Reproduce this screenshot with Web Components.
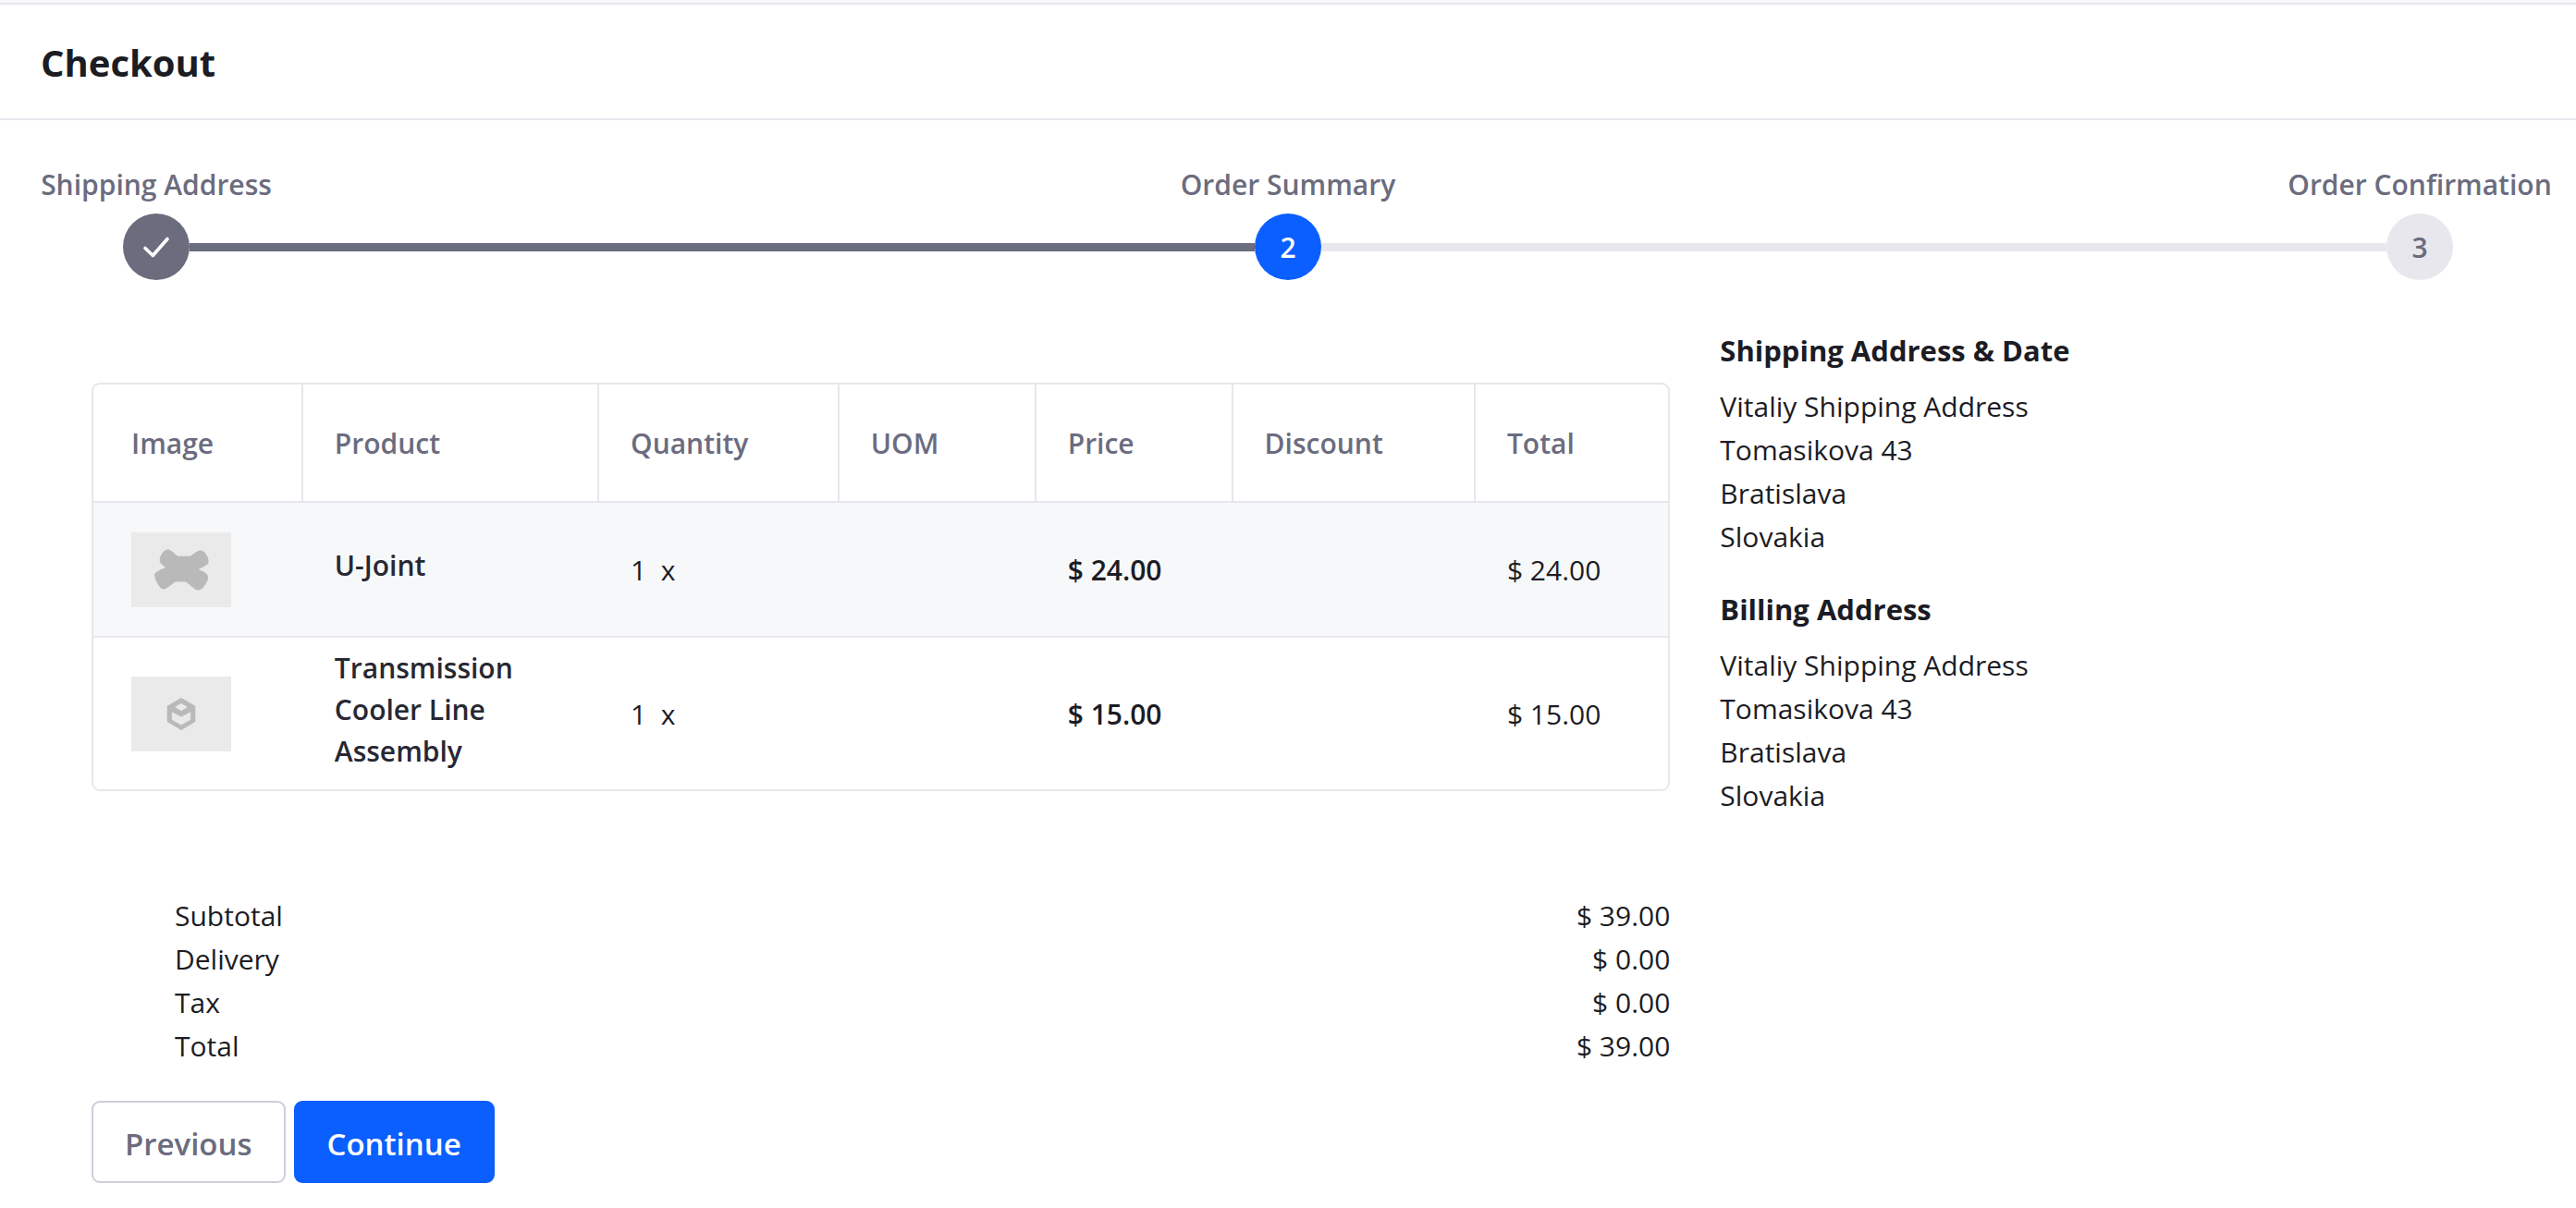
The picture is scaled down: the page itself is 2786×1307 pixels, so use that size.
<!DOCTYPE html>
<html lang="en">
<head>
<meta charset="utf-8">
<meta name="viewport" content="width=device-width, initial-scale=1">
<title>Checkout</title>
<style>
  html {
    --ink: #1c1c24;
    --ink-soft: #272833;
    --muted: #6b6c7e;
    --line: #e7e7ed;
    --stripe: #f7f8f9;
    --primary: #0b5fff;
    background: #fff;
  }
  body {
    margin: 0;
    font: 400 30px/47px "Open Sans", "Noto Sans", sans-serif;
    color: var(--ink);
  }
</style>
</head>
<body>
<checkout-page>
  <page-title slot="title">Checkout</page-title>
  <step-progress slot="steps" current="2" labels="Shipping Address|Order Summary|Order Confirmation"></step-progress>
  <order-items slot="order"></order-items>
  <order-totals slot="order"></order-totals>
  <checkout-actions slot="order"></checkout-actions>
  <address-block slot="aside">
    <span slot="heading">Shipping Address &amp; Date</span>
    <div>Vitaliy Shipping Address</div>
    <div>Tomasikova 43</div>
    <div>Bratislava</div>
    <div>Slovakia</div>
  </address-block>
  <address-block slot="aside">
    <span slot="heading">Billing Address</span>
    <div>Vitaliy Shipping Address</div>
    <div>Tomasikova 43</div>
    <div>Bratislava</div>
    <div>Slovakia</div>
  </address-block>
</checkout-page>

<script>
  class BaseElement extends HTMLElement {
    connectedCallback() {
      if (this.shadowRoot) return;
      this.attachShadow({ mode: 'open' }).innerHTML = this.render();
    }
  }

  class CheckoutPage extends BaseElement {
    render() {
      return `
        <style>
          :host { display: block; }
          .strip { height: 3px; background: var(--stripe); border-bottom: 2px solid var(--line); }
          main { display: grid; grid-template-columns: minmax(0, 2fr) minmax(0, 1fr); margin-top: 53px; padding: 0 72px; }
          .order, aside { padding: 0 27px; }
          .order { padding-top: 58px; }
          aside { display: flex; flex-direction: column; gap: 32px; }
        </style>
        <div class="strip"></div>
        <slot name="title"></slot>
        <slot name="steps"></slot>
        <main>
          <div class="order"><slot name="order"></slot></div>
          <aside><slot name="aside"></slot></aside>
        </main>`;
    }
  }

  class PageTitle extends BaseElement {
    render() {
      return `
        <style>
          :host { display: block; padding: 39px 44px 36px; border-bottom: 2px solid var(--line); }
          h1 { margin: 0; font-size: 40px; line-height: 48px; font-weight: 700; }
        </style>
        <h1><slot></slot></h1>`;
    }
  }

  class StepProgress extends BaseElement {
    render() {
      const labels = this.getAttribute('labels').split('|');
      const current = Number(this.getAttribute('current'));
      const state = n => n < current ? 'done' : n === current ? 'active' : 'todo';
      const check = `<svg viewBox="0 0 72 72" role="img" aria-label="Complete"><path d="M24 37.5 L32.3 45.5 L48 27.5" fill="none" stroke="#fff" stroke-width="3.6" stroke-linecap="round" stroke-linejoin="round"/></svg>`;
      const track = labels.map((label, i) => {
        const n = i + 1;
        const line = n < labels.length ? `<i class="${state(n)}"></i>` : '';
        return `<b class="${state(n)}">${state(n) === 'done' ? check : n}</b>${line}`;
      }).join('');
      return `
        <style>
          :host { display: block; padding-top: 46px; color: var(--muted); font-weight: 600; }
          .labels { display: flex; justify-content: space-between; padding: 0 41px; line-height: 48px; white-space: nowrap; }
          .labels div { width: 256px; display: flex; justify-content: center; }
          .track { display: flex; align-items: center; margin-top: 7px; padding: 0 133px; }
          b { flex: none; width: 72px; height: 72px; border-radius: 50%; display: grid; place-items: center; font-weight: 600; background: var(--line); }
          b.done { background: var(--muted); }
          b.active { background: var(--primary); color: #fff; }
          i { flex: 1; height: 9px; background: var(--line); }
          i.done { background: var(--muted); }
          svg { width: 72px; height: 72px; display: block; }
        </style>
        <div class="labels">${labels.map(l => `<div><span>${l}</span></div>`).join('')}</div>
        <div class="track">${track}</div>`;
    }
  }

  class ProductThumb extends BaseElement {
    render() {
      const shapes = {
        joint: `<path d="M35 20.5 Q39.5 16.6 44 20.5 L50.3 25.7 H63.7 L71 20.7 Q76.5 17.3 80.5 23 Q84.5 29 83.3 33.5 Q82.5 35 72.7 40 Q83 44 83 48 Q83.5 53 77 60.5 Q71.5 65 66.5 59.5 L59 53.6 L48 53.3 L38 60.5 Q34.5 62.5 31.5 60 Q26 53 25.1 46 Q25.3 43.5 29.5 41.5 Q33 39 37.3 38.2 Q31 34 30.6 30.5 Q30.6 25.5 35 20.5Z"/>`,
        box: `<path fill-rule="evenodd" d="M54 23.3 L69 32 V48.7 L54 57.7 L39 48.7 V32Z M54 28.7 L46.7 33 L54 37.5 L61.3 33Z M43.7 38 V47 L54 52.7 L64.3 47 V38 L54 43.3Z" stroke="#b8b8b8" stroke-width=".6" stroke-linejoin="round"/>`
      };
      return `
        <style>
          :host { display: block; width: 108px; height: 81px; background: #eaeaea; }
          svg { display: block; width: 108px; height: 81px; fill: #b9b9b9; }
        </style>
        <svg viewBox="0 0 108 81" aria-hidden="true">${shapes[this.getAttribute('shape')]}</svg>`;
    }
  }

  class OrderItems extends BaseElement {
    render() {
      const items = [
        { shape: 'joint', name: 'U-Joint', qty: 1, price: '$ 24.00', total: '$ 24.00' },
        { shape: 'box', name: 'Transmission Cooler Line Assembly', qty: 1, price: '$ 15.00', total: '$ 15.00' }
      ];
      const heads = ['Image', 'Product', 'Quantity', 'UOM', 'Price', 'Discount', 'Total'];
      const widths = [13.2, 18.8, 15.25, 12.5, 12.5, 15.4, 12.35];
      return `
        <style>
          :host { display: block; border: 2px solid var(--line); border-radius: 9px; overflow: hidden; }
          table { width: 100%; table-layout: fixed; border-collapse: separate; border-spacing: 0; text-align: left; }
          th, td { box-sizing: border-box; padding: 0 36px; vertical-align: middle; border-bottom: 2px solid var(--line); }
          th { height: 128px; padding-left: 34px; font-weight: 600; color: var(--muted); border-left: 2px solid var(--line); }
          td { height: 146px; }
          th:first-child, td:first-child { padding-left: 41px; border-left: 0; }
          tbody tr:nth-child(odd) { background: var(--stripe); }
          tbody tr:last-child td { height: 164px; border-bottom: 0; }
          .name { margin-bottom: 10px; line-height: 45px; font-weight: 600; color: var(--ink-soft); }
          .price { font-weight: 600; }
        </style>
        <table>
          <colgroup>${widths.map(w => `<col style="width:${w}%">`).join('')}</colgroup>
          <thead><tr>${heads.map(h => `<th scope="col">${h}</th>`).join('')}</tr></thead>
          <tbody>${items.map(it => `
            <tr>
              <td><product-thumb shape="${it.shape}"></product-thumb></td>
              <td><div class="name">${it.name}</div></td>
              <td>${it.qty} &nbsp;x</td>
              <td></td>
              <td class="price">${it.price}</td>
              <td></td>
              <td>${it.total}</td>
            </tr>`).join('')}
          </tbody>
        </table>`;
    }
  }

  class OrderTotals extends BaseElement {
    render() {
      const rows = [['Subtotal', '$ 39.00'], ['Delivery', '$ 0.00'], ['Tax', '$ 0.00'], ['Total', '$ 39.00']];
      return `
        <style>
          :host { display: block; margin-top: 111px; padding-left: 90px; }
          dl { margin: 0; }
          div { display: flex; justify-content: space-between; }
          dd { margin: 0; }
        </style>
        <dl>${rows.map(([k, v]) => `<div><dt>${k}</dt><dd>${v}</dd></div>`).join('')}</dl>`;
    }
  }

  class CheckoutActions extends BaseElement {
    render() {
      return `
        <style>
          :host { display: flex; gap: 9px; margin-top: 36px; }
          button { margin: 0; padding: 21px 34px 17px; border: 2px solid #cdced9; border-radius: 9px; background: #fff; color: var(--muted); font: inherit; font-size: 33px; font-weight: 600; cursor: pointer; }
          .primary { border-color: var(--primary); background: var(--primary); color: #fff; }
        </style>
        <button type="button">Previous</button>
        <button type="submit" class="primary">Continue</button>`;
    }
  }

  class AddressBlock extends BaseElement {
    render() {
      return `
        <style>
          :host { display: block; }
          h2 { margin: 0 0 13px; font-size: 31px; line-height: inherit; font-weight: 700; }
        </style>
        <h2><slot name="heading"></slot></h2>
        <slot></slot>`;
    }
  }

  customElements.define('product-thumb', ProductThumb);
  customElements.define('page-title', PageTitle);
  customElements.define('step-progress', StepProgress);
  customElements.define('order-items', OrderItems);
  customElements.define('order-totals', OrderTotals);
  customElements.define('checkout-actions', CheckoutActions);
  customElements.define('address-block', AddressBlock);
  customElements.define('checkout-page', CheckoutPage);
</script>
</body>
</html>
